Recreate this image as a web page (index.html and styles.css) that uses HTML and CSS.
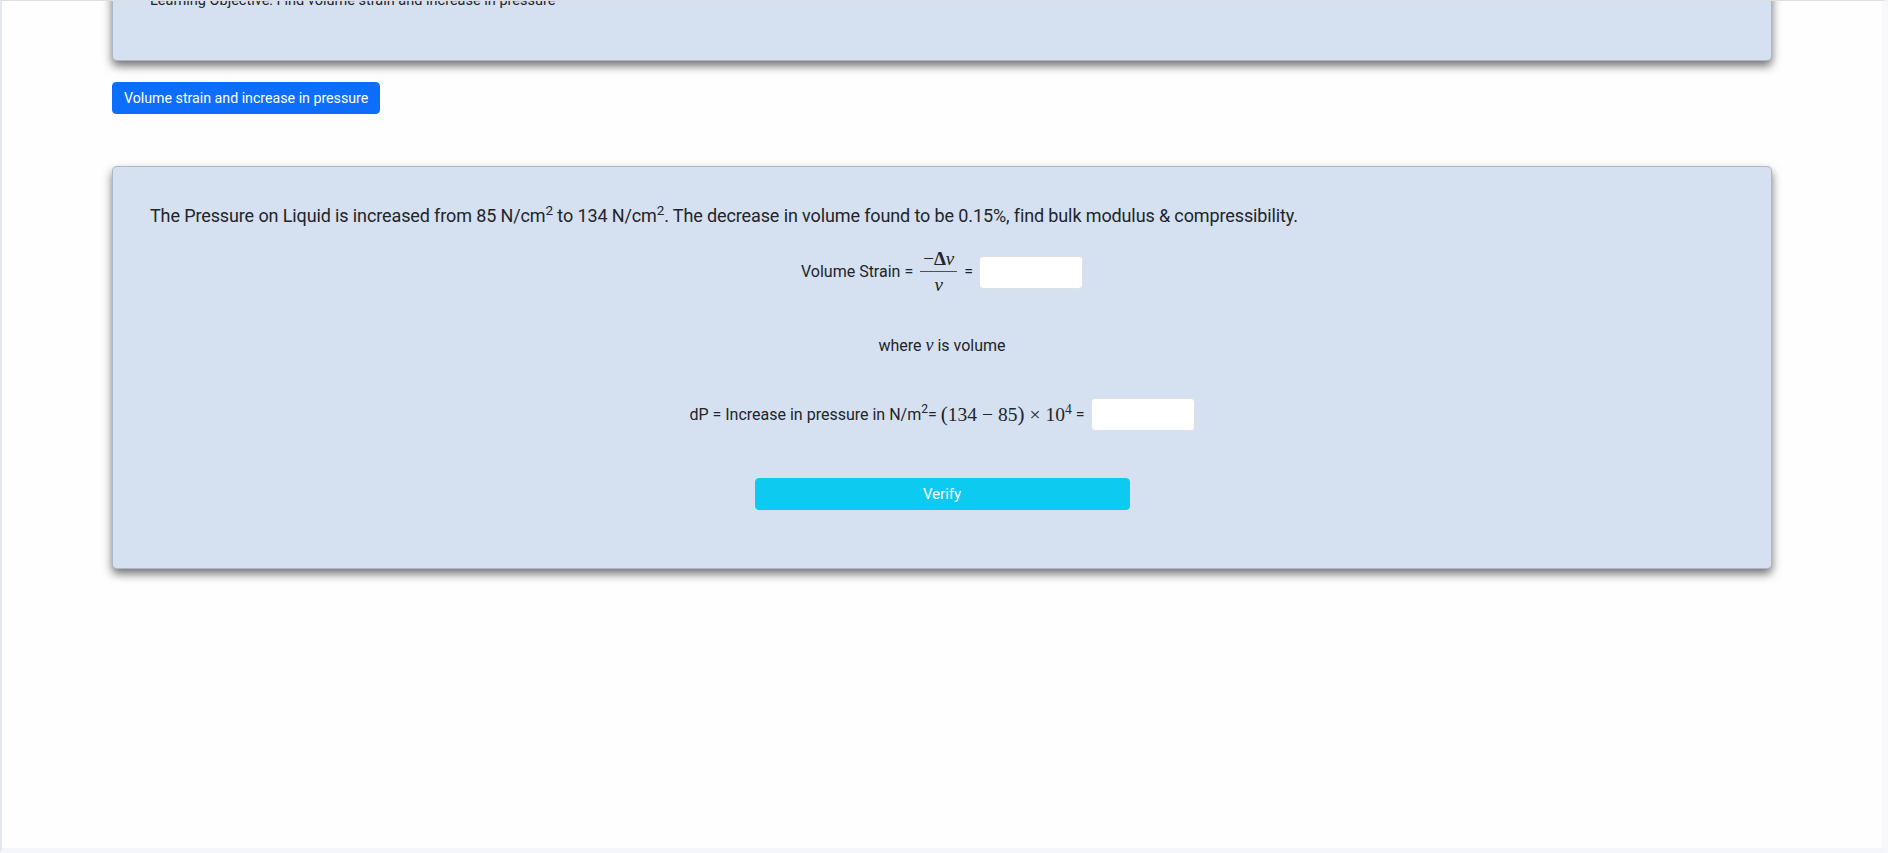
FILE: index.html
```html
<!DOCTYPE html>
<html lang="en">
<head>
<meta charset="utf-8">
<title>Volume strain and increase in pressure</title>
<link rel="stylesheet" href="styles.css">
</head>
<body>
<div class="frame">
  <div class="container">
    <div class="card card-objective">
      <p class="objective">Learning Objective: Find volume strain and increase in pressure</p>
    </div>

    <button class="btn btn-primary">Volume strain and increase in pressure</button>

    <div class="card card-main">
      <p class="question">The Pressure on Liquid is increased from 85 N/cm<sup>2</sup> to 134 N/cm<sup>2</sup>. The decrease in volume found to be 0.15%, find bulk modulus &amp; compressibility.</p>

      <div class="row row-strain">
        <span>Volume Strain =</span>
        <span class="frac">
          <span class="num"><span class="m">−<b>Δ</b></span><span class="mi">v</span></span>
          <span class="bar"></span>
          <span class="den"><span class="mi">v</span></span>
        </span>
        <span>=</span>
        <input class="form-control" type="text">
      </div>

      <p class="where">where <span class="mi small">v</span> is volume</p>

      <div class="row row-dp">
        <span>dP = Increase in pressure in N/m<sup>2</sup>=</span>
        <span class="math"><span class="paren">(</span>134<span class="op">−</span>85<span class="paren">)</span><span class="op">×</span>10<sup class="msup">4</sup></span>
        <span>=</span>
        <input class="form-control" type="text">
      </div>

      <div class="verify-wrap">
        <button class="btn btn-info">Verify</button>
      </div>
    </div>
  </div>
</div>
</body>
</html>
```

FILE: styles.css
```css
* { box-sizing: border-box; }

html, body {
  margin: 0;
  padding: 0;
  background: #ffffff;
}

body {
  font-family: Roboto, "Noto Sans", "Liberation Sans", sans-serif;
  color: #212529;
  font-size: 16px;
  line-height: 1.5;
}

.frame {
  height: 853px;
  overflow: hidden;
  border-top: 1px solid #dcdee4;
  border-left: 2px solid #e2e7f0;
  border-right: 6px solid #f7f8fc;
  border-bottom: 5px solid #f4f6fb;
  background: #fefefe;
}

.container {
  padding: 0 110px;
}

.card {
  background: #d5e0f1;
  border: 1px solid rgba(0, 0, 0, 0.18);
  border-radius: 5px;
  box-shadow: 0 5px 10px rgba(0, 0, 0, 0.55);
}

.card-objective {
  margin-top: -41px;
  height: 101px;
  padding: 28px 37px 0;
}

.objective {
  margin: 0;
  font-size: 14.5px;
  line-height: 24px;
}

.btn {
  border: 1px solid transparent;
  border-radius: 4px;
  font-family: Roboto, "Noto Sans", "Liberation Sans", sans-serif;
  color: #ffffff;
  cursor: pointer;
}

.btn-primary {
  display: block;
  margin-top: 21px;
  height: 32px;
  padding: 0 11px;
  font-size: 14.2px;
  background: #0d6efd;
  border-color: #0d6efd;
}

.card-main {
  margin-top: 52px;
  padding: 37px 37px 58px;
}

.question {
  margin: 0;
  font-size: 18px;
  line-height: 24px;
  letter-spacing: -0.12px;
}

sup {
  font-size: 0.75em;
  line-height: 0;
  vertical-align: 0.55em;
}

.row {
  display: flex;
  justify-content: center;
  align-items: center;
  gap: 4px;
  font-size: 16px;
}

.row-strain {
  margin-top: 21px;
  height: 46px;
}

.frac {
  display: inline-flex;
  flex-direction: column;
  align-items: center;
  margin: 0 3px;
  font-family: "Liberation Serif", "DejaVu Serif", serif;
  font-size: 19px;
  line-height: 1;
}

.num, .den {
  padding: 0 3px;
  line-height: 20px;
}

.bar {
  align-self: stretch;
  height: 1.5px;
  background: #4a4f58;
  margin: 2px 0 3px;
}

.mi {
  font-family: "Liberation Serif", "DejaVu Serif", serif;
  font-style: italic;
  font-size: 19px;
}

.mi.small {
  font-size: 18px;
}

.m {
  font-family: "Liberation Serif", "DejaVu Serif", serif;
}

.form-control {
  width: 104px;
  height: 33px;
  margin-left: 2px;
  border: 1px solid #dee2e6;
  border-radius: 4px;
  background: #ffffff;
  font-size: 16px;
  padding: 4px 8px;
}

.where {
  margin: 38px 0 0;
  text-align: center;
  font-size: 16px;
  line-height: 24px;
}

.row-dp {
  margin-top: 40px;
  height: 33px;
}

.math {
  font-family: "Liberation Serif", "DejaVu Serif", serif;
  font-size: 19.5px;
  white-space: nowrap;
}

.math .paren {
  font-size: 21px;
}

.math .op {
  padding: 0 5px;
}

.msup {
  font-size: 0.7em;
}

.verify-wrap {
  display: flex;
  justify-content: center;
  margin-top: 47px;
}

.btn-info {
  width: 375px;
  height: 32px;
  font-size: 15px;
  background: #0dcaf0;
  border-color: #0dcaf0;
}
```
